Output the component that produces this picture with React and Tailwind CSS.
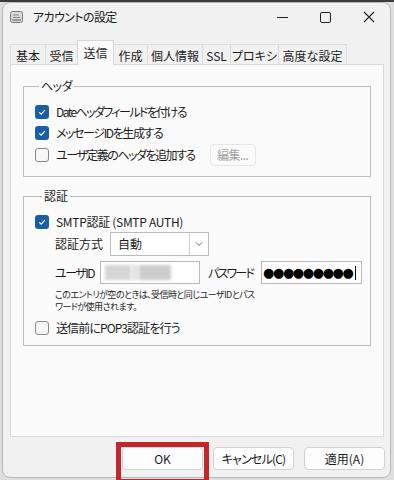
import React from 'react';

const font = "font-['Noto_Sans_CJK_JP','Noto_Sans',sans-serif] [font-feature-settings:'palt']";

const tabs = [
    ['基本', 35],
    ['受信', 32],
    ['送信', 37, true],
    ['作成', 33],
    ['個人情報', 55],
    ['SSL', 28],
    ['プロキシ', 48],
    ['高度な設定', 69],
];

const Check = ({ on }) =>
    on ? (
        <span className="w-[14px] h-[14px] rounded-[3px] bg-[#1b5ea8] flex items-center justify-center shrink-0">
            <svg width="10" height="10" viewBox="0 0 10 10">
                <path d="M2.2 5.3 L4.2 7.2 L7.9 3.1" fill="none" stroke="white" strokeWidth="1.1" />
            </svg>
        </span>
    ) : (
        <span className="w-[14px] h-[14px] rounded-[3px] border border-[#8a8a8a] bg-[#f7f7f7] shrink-0" />
    );

const CheckRow = ({ on, children, className = 'h-[21px]', track = '' }) => (
    <div className={`flex items-center gap-[7px] ${className}`}>
        <Check on={on} />
        <span className={`leading-none whitespace-nowrap ${track}`}>{children}</span>
    </div>
);

const Btn = ({ children, track = '' }) => (
    <button className={`w-[81px] h-[23px] rounded-[4px] border border-[#d2d2d2] bg-[#fdfdfd] text-[12px] text-[#1a1a1a] leading-none ${track}`}>
        {children}
    </button>
);

const App = () => {
    return (
        <div className={`relative w-[394px] h-[480px] overflow-hidden bg-[#dedede] ${font} text-[12px] text-[#1b1b1b]`}>
            <div className="h-[2px] bg-[#3c3c3c]" />
            <div className="ml-[2px] w-[389px] h-[476px] rounded-[8px] border border-[#b8b8b8] bg-[#f1f1f1] flex flex-col">
                {/* title bar */}
                <div className="h-[28px] flex items-center">
                    <div className="pl-[7px] pr-[10px]">
                        <svg width="13" height="12" viewBox="0 0 13 12">
                            <rect x="0.5" y="0.5" width="12" height="11" rx="2" fill="#d9d9d9" stroke="#7a7a7a" />
                            <path d="M3 4 H9 M3 6.5 H10" stroke="#8a8a8a" strokeWidth="1" />
                            <rect x="2" y="8" width="9" height="2" fill="#9a9a9a" />
                        </svg>
                    </div>
                    <span className="text-[12px] leading-none tracking-[-0.6px]">アカウントの設定</span>
                    <div className="ml-auto flex h-full">
                        <div className="w-[43px] flex items-center justify-center">
                            <div className="w-[11px] h-px bg-[#222]" />
                        </div>
                        <div className="w-[43px] flex items-center justify-center">
                            <div className="w-[11px] h-[11px] border border-[#222] rounded-[2px]" />
                        </div>
                        <div className="w-[43px] flex items-center justify-center">
                            <svg width="12" height="12" viewBox="0 0 12 12">
                                <path d="M1 1 L11 11 M11 1 L1 11" stroke="#222" strokeWidth="1.1" />
                            </svg>
                        </div>
                    </div>
                </div>

                {/* tabs */}
                <div className="mt-[9px] ml-[7px] h-[25px] flex items-end -mb-px relative z-10">
                    {tabs.map(([label, w, sel], i) =>
                        sel ? (
                            <div
                                key={label}
                                style={{ width: w }}
                                className="h-[25px] bg-[#fbfbfb] border border-b-0 border-[#d6d6d6] flex items-center justify-center leading-none"
                            >
                                {label}
                            </div>
                        ) : (
                            <div
                                key={label}
                                style={{ width: w }}
                                className={`h-[21px] border-t border-[#dcdcdc] ${i === 0 || i === 3 ? '' : 'border-l'} ${i === tabs.length - 1 ? 'border-r' : ''} ${i === 0 ? 'border-l' : ''} flex items-center justify-center leading-none pt-[1px]`}
                            >
                                {label}
                            </div>
                        )
                    )}
                </div>

                {/* panel */}
                <div className="ml-[7px] w-[374px] h-[373px] border border-[#dadada] bg-[#fbfbfb] px-[12px]">
                    <fieldset className="mt-[14px] border border-[#bdbdbd] pl-[11px] pb-[10px]">
                        <legend className="ml-[4px] px-[2px] leading-[14px] tracking-[-0.5px]">ヘッダ</legend>
                        <div className="pt-[8px]">
                            <CheckRow on track="tracking-[-1.6px]">Dateヘッダフィールドを付ける</CheckRow>
                            <CheckRow on track="tracking-[-1.4px]">メッセージIDを生成する</CheckRow>
                            <div className="flex items-center h-[23px]">
                                <CheckRow track="tracking-[-1.5px]">ユーザ定義のヘッダを追加する</CheckRow>
                                <button className="ml-[15px] w-[46px] h-[22px] rounded-[4px] border border-[#e6e6e6] bg-[#fbfbfb] text-[#a3a3a3] leading-none tracking-[-0.5px]">
                                    編集...
                                </button>
                            </div>
                        </div>
                    </fieldset>

                    <fieldset className="mt-[12px] border border-[#bdbdbd] pl-[11px] pb-[7px]">
                        <legend className="ml-[7px] px-[2px] leading-[14px]">認証</legend>
                        <div className="pt-[9px]">
                            <CheckRow on className="h-[20px]" track="tracking-[-0.3px]">SMTP認証 (SMTP AUTH)</CheckRow>
                            <div className="pl-[20px]">
                                <div className="flex items-center h-[24px]">
                                    <span className="w-[55px] leading-none whitespace-nowrap">認証方式</span>
                                    <div className="w-[99px] h-[24px] border border-[#bcbcbc] bg-white flex">
                                        <span className="flex-1 flex items-center pl-[7px] leading-none">自動</span>
                                        <span className="w-[19px] border-l border-[#cfcfcf] flex items-center justify-center">
                                            <svg width="8" height="6" viewBox="0 0 8 6">
                                                <path d="M1 1.5 L4 4.5 L7 1.5" fill="none" stroke="#666" strokeWidth="1" />
                                            </svg>
                                        </span>
                                    </div>
                                </div>
                                <div className="mt-[5px] flex items-center h-[23px]">
                                    <span className="w-[45px] leading-none whitespace-nowrap tracking-[-1.5px]">ユーザID</span>
                                    <div className="w-[100px] h-[23px] border border-[#b8b8b8] bg-white flex items-center pl-[4px]">
                                        <div className="w-[26px] h-[15px] bg-[#d6d6d6] blur-[1.5px]" />
                                        <div className="w-[8px] h-[15px] bg-[#e4e4e4] blur-[1.5px]" />
                                        <div className="w-[32px] h-[15px] bg-[#cdcdcd] blur-[1.5px]" />
                                    </div>
                                    <span className="ml-[8px] w-[53px] leading-none whitespace-nowrap tracking-[-1.8px]">パスワード</span>
                                    <div className="w-[101px] h-[23px] border border-[#b8b8b8] bg-white flex items-center pl-[1px]">
                                        <span className="text-[13px] tracking-[-1.4px] leading-none text-black font-['DejaVu_Sans',sans-serif]">●●●●●●●●●</span>
                                        <span className="ml-[2px] w-px h-[14px] bg-black" />
                                    </div>
                                </div>
                                <p className="mt-[5px] text-[9px] leading-[12px] tracking-[-0.55px] whitespace-nowrap">
                                    このエントリが空のときは、受信時と同じユーザIDとパス
                                    <br />
                                    ワードが使用されます。
                                </p>
                            </div>
                            <CheckRow className="mt-[5px] h-[20px]" track="tracking-[-0.9px]">送信前にPOP3認証を行う</CheckRow>
                        </div>
                    </fieldset>
                </div>

                {/* buttons */}
                <div className="mt-[10px] flex justify-end gap-[10px] pr-[5px]">
                    <Btn>OK</Btn>
                    <Btn track="tracking-[-0.8px]">キャンセル(C)</Btn>
                    <Btn>適用(A)</Btn>
                </div>
            </div>

            {/* red highlight around OK */}
            <div className="absolute left-[116px] top-[442px] w-[93px] h-[42px] border-[5px] border-[#c1272d]" />
        </div>
    );
};

export default App;
